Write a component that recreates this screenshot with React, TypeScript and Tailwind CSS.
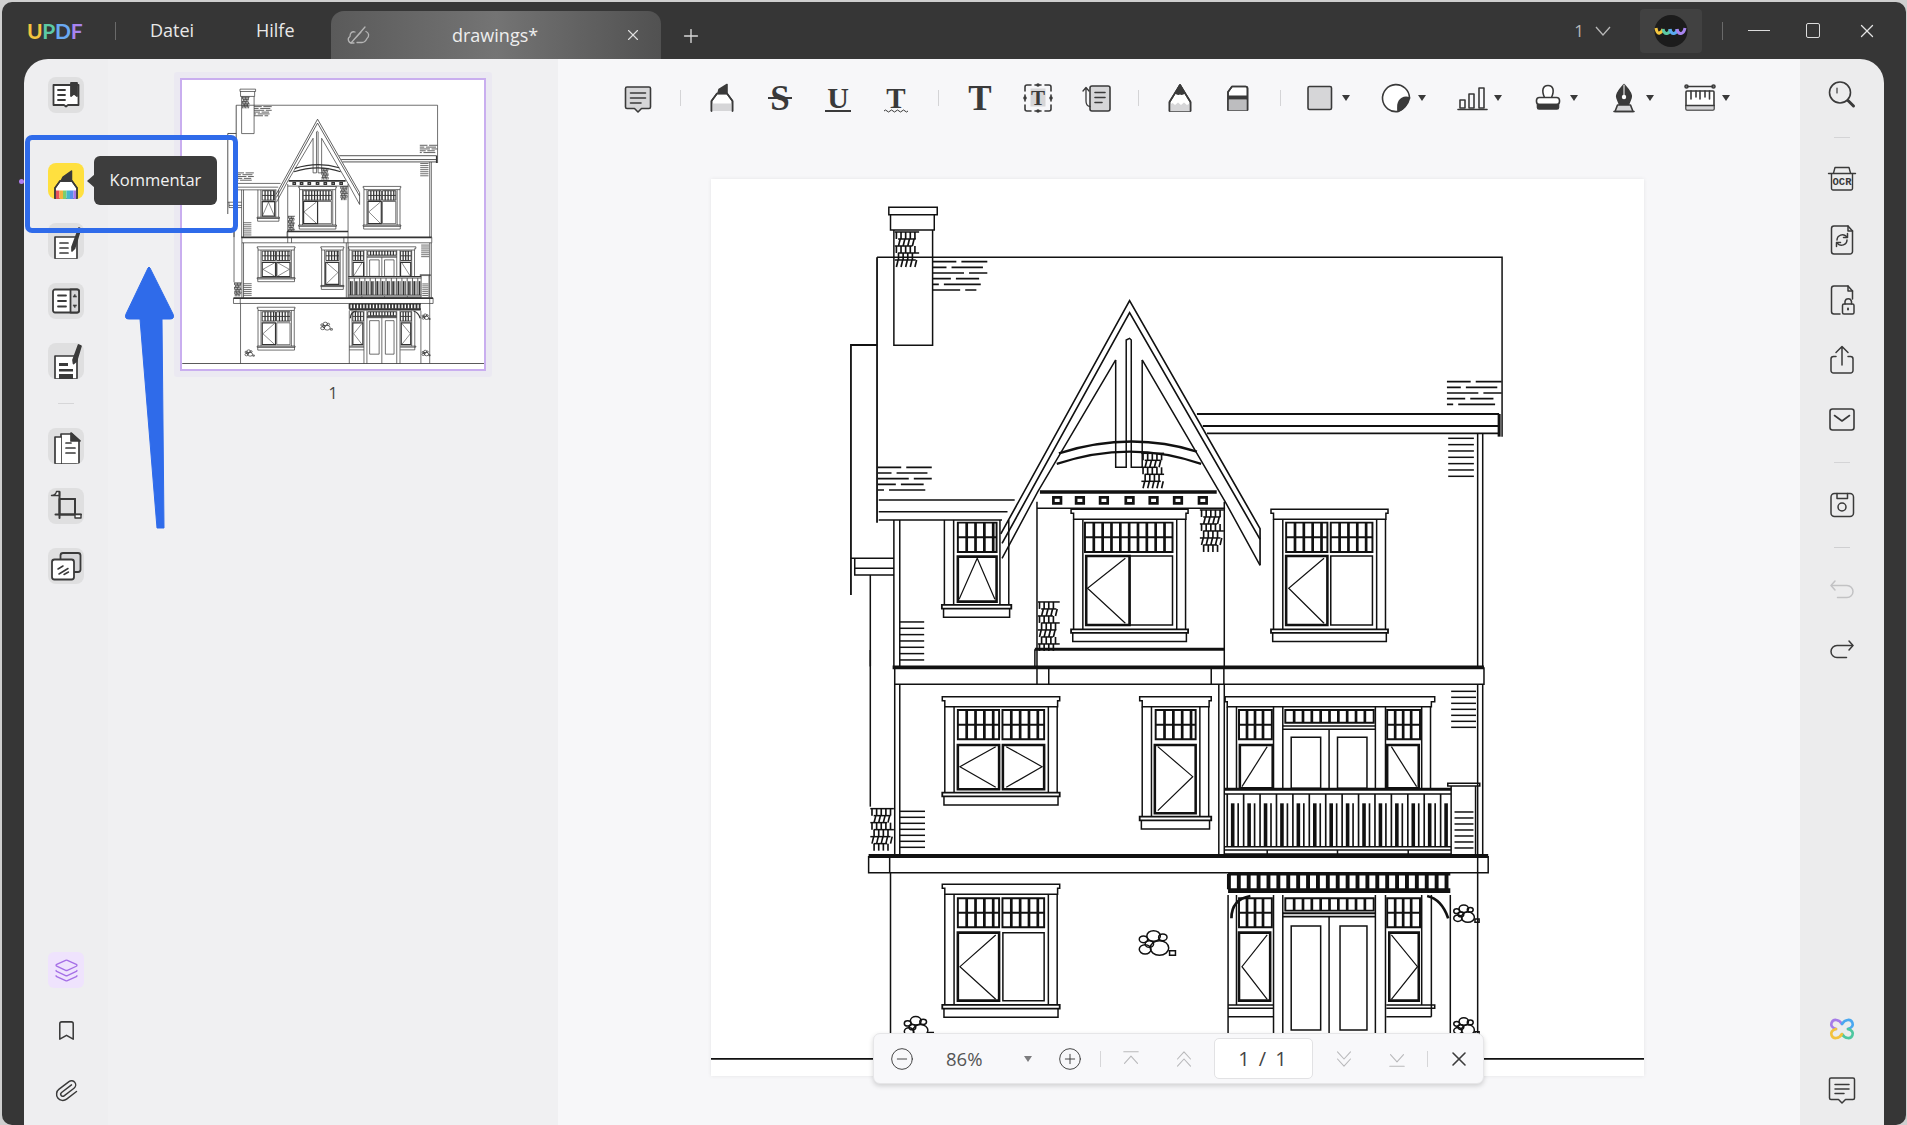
import { createContext, useContext, type ReactNode } from "react";
import { Bookmark, Layers, Paperclip, Plus, X } from "lucide-react";

const INK = "#3a3a3a";
const TINT = "#d6d6d8";

// ── Line work for the drawing ─────────────────────────────────────────────────
const LineWidth = createContext(1.4);

function L({ d, w = 1 }: { d: string; w?: number }) {
  const lw = useContext(LineWidth);
  return <path d={d} fill="none" stroke="currentColor" strokeWidth={lw * w} vectorEffect="non-scaling-stroke" />;
}

function steps(from: number, to: number, step: number) {
  const out: number[] = [];
  for (let v = from; v <= to + 0.01; v += step) out.push(v);
  return out;
}

const box = (x1: number, y1: number, x2: number, y2: number) => `M${x1} ${y1}H${x2}V${y2}H${x1}Z`;
const blob = (x: number, y: number, r: number) => `M${x - r} ${y}a${r} ${r} 0 1 0 ${r * 2} 0a${r} ${r} 0 1 0 ${-r * 2} 0Z`;

function Grille({ x1, x2, y1, y2, rows = 2, pane = 21 }: { x1: number; x2: number; y1: number; y2: number; rows?: number; pane?: number }) {
  const cols = steps(x1 + pane, x2 - 4, pane);
  const bars = rows === 2 ? [(y1 + y2) / 2] : [];
  return (
    <>
      <L d={box(x1, y1, x2, y2)} w={1.3} />
      {cols.map((x) => <L key={x} d={`M${x} ${y1}V${y2}`} w={1.8} />)}
      {bars.map((y) => <L key={y} d={`M${x1} ${y}H${x2}`} w={1.3} />)}
    </>
  );
}

function Hatch({ x1, x2, y1, y2, step = 19 }: { x1: number; x2: number; y1: number; y2: number; step?: number }) {
  return <>{steps(y1, y2, step).map((y) => <L key={y} d={`M${x1} ${y}H${x2}`} />)}</>;
}

// hatch with the breaks that the roof patches have
function RoofHatch({ x1, x2, y1, y2, step = 17 }: { x1: number; x2: number; y1: number; y2: number; step?: number }) {
  const span = x2 - x1;
  const breaks = [0.48, 0.3, 0.62, 0.38, 0.16, 0.55];
  const trims = [0, 0.08, 0, 0.15, 0.12, 0.2];
  return (
    <>
      {steps(y1, y2, step).map((y, i) => {
        const gap = x1 + span * breaks[i % 6];
        const end = x2 - span * trims[i % 6];
        return <L key={y} d={`M${x1} ${y}H${gap - 6}M${gap + 6} ${y}H${end}`} w={1.1} />;
      })}
    </>
  );
}

function Shingles({ x1, x2, y1, y2 }: { x1: number; x2: number; y1: number; y2: number }) {
  const rows = steps(y1, y2 - 10, 21);
  return (
    <>
      {rows.map((y, i) => (
        <g key={y}>
          <L d={`M${x1 + (i % 2) * 8} ${y}H${x2 - (i % 3) * 8}`} />
          {steps(x1 + 4 + (i % 2) * 5, x2 - 6, 11).map((x) => (
            <L key={x} d={`M${x + (i % 3 === 1 ? 4 : 0)} ${y}L${x} ${y + 21}`} w={1.1} />
          ))}
        </g>
      ))}
    </>
  );
}

function Window({ x, r, y, b, cap = true, foot = 37, children }: { x: number; r: number; y: number; b: number; cap?: boolean; foot?: number; children?: ReactNode }) {
  const top = y + 30;
  return (
    <>
      {cap && <L d={`M${x} ${y}H${r}V${y + 12}H${r - 5}V${top}H${x + 6}V${y + 12}H${x}Z`} />}
      {[x + 6, x + 28, r - 27, r - 6].map((v) => <L key={v} d={`M${v} ${top}V${b}`} />)}
      <L d={box(x, b, r, b + 11)} w={1.2} />
      <L d={`M${x + 4} ${b + 11}V${b + foot}H${r - 4}V${b + 11}`} />
      {children}
    </>
  );
}

function Sash({ x1, x2, y1, y2, d, thin = false }: { x1: number; x2: number; y1: number; y2: number; d?: string; thin?: boolean }) {
  return (
    <>
      <L d={box(x1, y1, x2, y2)} w={thin ? 1 : 1.7} />
      {d && <L d={d} w={0.8} />}
    </>
  );
}

function Shrub({ x, y, k = 1 }: { x: number; y: number; k?: number }) {
  return (
    <>
      <L d={blob(x, y - 22 * k, 16 * k)} />
      <L d={blob(x - 24 * k, y - 12 * k, 10 * k)} />
      <L d={blob(x + 22 * k, y - 18 * k, 10 * k)} />
      <L d={blob(x + 14 * k, y + 14 * k, 22 * k)} />
      <L d={blob(x - 20 * k, y + 18 * k, 14 * k)} />
      <L d={blob(x - 10 * k, y + 2 * k, 10 * k)} />
      <L d={box(x + 38 * k, y + 22 * k, x + 52 * k, y + 36 * k)} />
    </>
  );
}

// traced in two bands, coordinates are crop pixels of the upper and the lower half
function House({ lw, className }: { lw: number; className: string }) {
  return (
    <LineWidth.Provider value={lw}>
      <svg viewBox="711 179 933 897" className={className}>
        <g transform="translate(840 190) scale(.4209 .3333)">
          {/* chimney and main roof */}
          <L d={box(116, 52, 231, 74)} />
          <L d="M120 74V120H224V74" />
          <L d="M128 120V466H220V120" />
          <Shingles x1={130} x2={188} y1={126} y2={232} />
          <L d="M88 202H1573V740" />
          <L d="M88 202V998" w={1.2} />
          <L d="M88 465H26V1215" w={1.2} />
          <L d="M26 1105H128M35 1105V1155H128M35 1135H128M72 1155V1430M128 990V1430M142 990V1430" />
          <RoofHatch x1={220} x2={350} y1={215} y2={300} />
          <RoofHatch x1={1442} x2={1572} y1={575} y2={658} />
          <Hatch x1={1445} x2={1506} y1={745} y2={860} step={19} />
          <RoofHatch x1={90} x2={218} y1={832} y2={915} />
          <Hatch x1={142} x2={200} y1={1296} y2={1412} step={19} />
          {/* eaves */}
          <L d="M92 930H415M92 965H398M92 990H385" />
          <L d="M848 672H1566M862 708H1566M872 730H1566" w={1.2} />
          <L d="M1566 672V740" w={2} />
          <L d="M1515 730V1430M1527 730V1430" />
          {/* gable */}
          <L d="M382 1032L688 332L998 1016V1126" w={1.1} />
          <L d="M385 1060L688 368L998 1048" w={1.1} />
          <L d="M385 1105L470 905L655 510M718 510L915 935L998 1126" />
          <L d="M655 510V832H680V450L688 445L692 450V832H718V510" />
          <L d="M520 790Q690 722 848 785" w={1.6} />
          <L d="M515 822Q690 748 858 822" w={1.6} />
          <Shingles x1={716} x2={770} y1={790} y2={904} />
          <Shingles x1={855} x2={912} y1={960} y2={1095} />
          <Shingles x1={470} x2={522} y1={1236} y2={1372} />
          <L d="M475 906H895" w={2.4} />
          <L d="M468 955H915M468 935V1430M913 935V1430" />
          {[516, 570, 627, 688, 745, 803, 862].map((x) => (
            <g key={x}>
              <L d={box(x - 9, 922, x + 9, 940)} w={1.8} />
            </g>
          ))}
          <L d="M463 1378H913" w={2} />
          <L d="M463 1378V1430" />
          {/* upper windows */}
          <Window x={242} r={407} y={960} b={1245} cap={false}>
            <Grille x1={280} x2={372} y1={998} y2={1086} />
            <Sash x1={280} x2={372} y1={1100} y2={1235} d="M283 1228L326 1105L368 1228" />
          </Window>
          <Window x={549} r={827} y={958} b={1318}>
            <Grille x1={582} x2={790} y1={998} y2={1086} />
            <Sash x1={585} x2={688} y1={1098} y2={1305} d="M678 1105L588 1195L678 1300" />
            <Sash x1={688} x2={790} y1={1098} y2={1305} thin />
          </Window>
          <Window x={1024} r={1302} y={958} b={1318}>
            <Grille x1={1060} x2={1158} y1={998} y2={1086} />
            <Grille x1={1166} x2={1265} y1={998} y2={1086} />
            <Sash x1={1060} x2={1158} y1={1098} y2={1305} d="M1150 1105L1066 1195L1150 1300" />
            <Sash x1={1166} x2={1265} y1={1098} y2={1305} thin />
          </Window>
        </g>

        <g transform="translate(840 650) scale(.4209 .3333)">
          {/* first floor beam */}
          <L d="M125 52H1530" w={2.4} />
          <L d="M130 52V103H1530V52M468 52V103M496 52V103M882 52V103M912 52V103" />
          <L d="M72 0V470" />
          <L d="M130 103V615M142 103V615M1515 103V615M1527 103V615M900 103V615M913 103V615" />
          <Hatch x1={1452} x2={1511} y1={124} y2={232} step={18} />
          <Hatch x1={142} x2={202} y1={484} y2={596} step={18} />
          <Shingles x1={72} x2={128} y1={476} y2={610} />
          <Window x={243} r={522} y={140} b={428}>
            <Grille x1={280} x2={378} y1={180} y2={268} />
            <Grille x1={386} x2={485} y1={180} y2={268} />
            <Sash x1={280} x2={378} y1={285} y2={418} d="M370 290L285 350L370 412" />
            <Sash x1={387} x2={485} y1={285} y2={418} d="M395 290L480 350L395 412" />
          </Window>
          <Window x={712} r={882} y={140} b={500}>
            <Grille x1={750} x2={845} y1={180} y2={268} />
            <Sash x1={748} x2={845} y1={285} y2={490} d="M755 290L838 380L755 482" />
          </Window>
          {/* balcony door group */}
          <L d="M915 140H1413V155H1405V170H920V155H915Z" />
          <L d="M920 170V415M942 170V415M1030 170V415M1052 170V415M1272 170V415M1296 170V415M1382 170V415M1403 170V415" />
          <Grille x1={948} x2={1026} y1={180} y2={268} pane={19} />
          <Grille x1={1300} x2={1378} y1={180} y2={268} pane={19} />
          <Grille x1={1058} x2={1268} y1={180} y2={218} rows={1} />
          <L d="M1052 228H1272M1052 238H1272M1162 238V415" />
          <L d={box(1072, 262, 1142, 415)} />
          <L d={box(1182, 262, 1252, 415)} />
          <Sash x1={950} x2={1028} y1={285} y2={415} d="M1015 290L955 410" />
          <Sash x1={1300} x2={1375} y1={285} y2={415} d="M1310 290L1370 410" />
          {/* railing */}
          <L d="M914 418H1452" w={2} />
          <L d="M914 432H1452M914 590H1452M914 600H1452M914 612H1452" />
          {steps(920, 1448, 13).map((x, i) => <L key={x} d={`M${x} ${i % 3 === 0 ? 432 : 460}V590`} w={i % 3 === 1 ? 2.4 : 1.1} />)}
          <L d="M1444 400H1520V408H1444ZM1452 408V612M1510 408V612M1015 600V612M1182 600V612M1350 600V612" />
          <Hatch x1={1460} x2={1505} y1={486} y2={606} step={18} />
          {/* main beam */}
          <L d="M68 618H1540" w={2.6} />
          <L d="M68 618V668H1540V618M118 618V668M1515 618V668" />
          <L d="M120 668V1227M1515 668V1227" />
          <Window x={243} r={522} y={703} b={1065}>
            <Grille x1={280} x2={378} y1={745} y2={832} />
            <Grille x1={386} x2={485} y1={745} y2={832} />
            <Sash x1={280} x2={378} y1={848} y2={1052} d="M370 855L285 950L370 1048" />
            <Sash x1={387} x2={485} y1={848} y2={1052} thin />
          </Window>
          <Shrub x={745} y={880} />
          <Shrub x={180} y={1130} k={0.8} />
          <Shrub x={1482} y={792} k={0.7} />
          <Shrub x={1482} y={1130} k={0.7} />
          {/* porch */}
          <L d="M922 672H1450" w={2} />
          <L d="M922 722H1450" w={3.2} />
          {steps(924, 1448, 23.5).map((x) => <L key={x} d={`M${x} 672V718`} w={2.6} />)}
          <L d="M930 805Q930 748 975 738" w={1.8} />
          <L d="M1445 805Q1430 748 1395 738" w={1.8} />
          <L d="M922 735V1227M942 735V1065M1030 735V1227M1052 735V1227M1272 735V1227M1296 735V1227M1382 735V1065M1405 735V1100M1450 735V1227M1162 800V1227" />
          <Grille x1={948} x2={1026} y1={745} y2={832} pane={19} />
          <Grille x1={1300} x2={1378} y1={745} y2={832} pane={19} />
          <Grille x1={1058} x2={1268} y1={745} y2={782} rows={1} />
          <L d="M1052 790H1272M1052 800H1272" w={1.3} />
          <L d={box(1072, 828, 1142, 1140)} />
          <L d={box(1188, 828, 1252, 1140)} />
          <Sash x1={948} x2={1022} y1={848} y2={1052} d="M1015 855L955 950L1015 1048" />
          <Sash x1={1305} x2={1375} y1={848} y2={1052} d="M1310 855L1372 950L1310 1048" />
          <L d="M922 1065H1030M922 1075H1030M922 1100H1030M1298 1065H1413V1075H1298M1298 1100H1405" />
          {/* ground */}
          <L d="M-310 1227H1920" w={1.15} />
        </g>
      </svg>
    </LineWidth.Provider>
  );
}

// ── Icon canvas ───────────────────────────────────────────────────────────────
function Ic({ children, size = 36, color = INK, sw = 1.6 }: { children: ReactNode; size?: number; color?: string; sw?: number }) {
  return (
    <svg width={size} height={size} viewBox="0 0 36 36" fill="none" stroke={color} strokeWidth={sw} strokeLinecap="round" strokeLinejoin="round">
      {children}
    </svg>
  );
}

const serif = "'Liberation Serif', serif";

// serif letter tools: the letter stays text, only the rule under or through it is a line
function Letter({ char, size, children }: { char: string; size: string; children?: ReactNode }) {
  return (
    <span className={`relative flex h-[36px] w-[36px] items-center justify-center font-['Liberation_Serif',serif] font-bold leading-none text-[#3a3a3a] ${size}`}>
      {char}
      {children}
    </span>
  );
}

const toolIcons: Record<string, ReactNode> = {
  comment: (
    <Ic>
      <path d="M7 7H29a1.5 1.5 0 0 1 1.5 1.5V27a1.5 1.5 0 0 1-1.5 1.5H21.5L18 32L14.500 28.500H7A1.500 1.500 0 0 1 5.500 27V8.500A1.500 1.500 0 0 1 7 7Z" fill={TINT} />
      <path d="M10.500 13H25.500M10.500 18H25.500M10.500 23H21" />
    </Ic>
  ),
  marker: (
    <Ic>
      <path d="M7.500 31V21L13 13.500H23L28.500 21V31" fill="#fff" />
      <path d="M7.500 31V23.500H28.500V31Z" fill={TINT} stroke="none" />
      <path d="M7.500 31V21L13 13.500H23L28.500 21V31" />
      <path d="M14 13.500L15 9.500L23 4.500V13.500Z" fill={INK} />
    </Ic>
  ),
  strike: (
    <Letter char="S" size="text-[35px]">
      <span className="absolute left-[6px] top-[17px] h-[2px] w-[24px] bg-[#3a3a3a]" />
    </Letter>
  ),
  under: (
    <Letter char="U" size="text-[30px]">
      <span className="absolute left-[5px] top-[30px] h-[2px] w-[26px] bg-[#3a3a3a]" />
    </Letter>
  ),
  squiggle: (
    <Letter char="T" size="text-[29px]">
      <svg width="26" height="4" viewBox="0 0 24 4" fill="none" stroke={INK} strokeWidth="1" className="absolute left-[5px] top-[29px]">
        <path d="M0 2q1.500-2 3 0t3 0t3 0t3 0t3 0t3 0t3 0t3 0" />
      </svg>
    </Letter>
  ),
  text: <Letter char="T" size="text-[35px]" />,
  textbox: (
    <span className="relative flex h-[36px] w-[36px] items-center justify-center">
      <span className="absolute inset-0">
        <Ic>
          <path d="M10.500 8.500H25.500V26.500H10.500Z" fill={TINT} stroke="none" />
          <path d="M11 5H7A2 2 0 0 0 5 7V11M25 5H29A2 2 0 0 1 31 7V11M11 31H7A2 2 0 0 1 5 29V25M25 31H29A2 2 0 0 0 31 29V25M15 5H21M15 31H21M5 15V21M31 15V21" />
          <circle cx="18" cy="5" r="1" fill={INK} />
          <circle cx="18" cy="31" r="1" fill={INK} />
          <circle cx="5" cy="18" r="1" fill={INK} />
          <circle cx="31" cy="18" r="1" fill={INK} />
        </Ic>
      </span>
      <span className="relative font-['Liberation_Serif',serif] text-[21px] font-bold leading-none text-[#3a3a3a]">T</span>
    </span>
  ),
  callout: (
    <Ic>
      <rect x="12" y="6" width="20" height="25" rx="2" fill={TINT} />
      <path d="M17 12.500H27M17 17.500H27M17 22.500H24" />
      <path d="M12 26.500Q8 26 8 21V8M5 11L8 7.500L11 11" strokeWidth="1.300" />
    </Ic>
  ),
  pencil: (
    <Ic>
      <path d="M7.500 31V22L18 5L28.500 22V31Z" fill="#fff" />
      <path d="M7.500 31V25L10.500 23L13 25L16 22.500L19 25L22 22.500L25 25L28.500 23V31Z" fill={TINT} stroke="none" />
      <path d="M7.500 31V22L18 5L28.500 22V31" />
      <path d="M13.500 13L18 5L22.500 13Q20 15 18 13.500Q16 15 13.500 13Z" fill={INK} />
    </Ic>
  ),
  eraser: (
    <Ic>
      <path d="M8 30V12L12 6.500H25.500A2 2 0 0 1 27.500 8.500V30Z" fill="#fff" />
      <path d="M8 19.500H27.500V30H8Z" fill="#bdbdbf" stroke="none" />
      <path d="M8 15.500H27.500V19.500H8Z" fill={INK} stroke="none" />
      <path d="M8 30V12L12 6.500H25.500A2 2 0 0 1 27.500 8.500V30" />
    </Ic>
  ),
  rect: (
    <Ic>
      <rect x="6" y="6.500" width="23.500" height="23" rx="1.500" fill={TINT} />
    </Ic>
  ),
  sticker: (
    <Ic>
      <path d="M29 23C27 27 24 30 20 31.500A13.500 13.500 0 1 1 31.500 18" fill="#fff" />
      <path d="M31.500 18C26 16 21 19 20 25Q19.800 28 20 31.500C25 30 30 25 31.500 18Z" fill={INK} />
    </Ic>
  ),
  chart: (
    <Ic>
      <path d="M4 29.500H33" />
      <rect x="6" y="20" width="5" height="8" />
      <rect x="15" y="14" width="5" height="14" />
      <rect x="25" y="8" width="5" height="20" />
    </Ic>
  ),
  stamp: (
    <Ic>
      <path d="M14.500 17.500C11.500 11 12.500 5.500 18 5.500S24.500 11 21.500 17.500" fill="#fff" />
      <rect x="6.500" y="17.500" width="23" height="7" rx="3" fill="#fff" />
      <path d="M7.500 24.500H28.500V27.500A1.500 1.500 0 0 1 27 29H9A1.500 1.500 0 0 1 7.500 27.500Z" fill={INK} />
    </Ic>
  ),
  nib: (
    <Ic>
      <path d="M18 4.500C12 11 9.500 15 11 18L13.500 24.500H22.500L25 18C26.500 15 24 11 18 4.500Z" fill={INK} />
      <circle cx="18" cy="17" r="2.200" fill="#fff" stroke="none" />
      <path d="M18 5V15" stroke="#fff" strokeWidth="1" />
      <path d="M9 31.500L11.500 25H24.500L27 31.500Z" fill={TINT} />
      <path d="M8 31.500H28" />
    </Ic>
  ),
  ruler: (
    <Ic>
      <path d="M5 6.500H31" />
      <circle cx="4.500" cy="6.500" r="1.500" />
      <circle cx="31.500" cy="6.500" r="1.500" />
      <rect x="4" y="11" width="28" height="19" rx="1" fill="#fff" />
      <path d="M4.500 25.500H31.500V29.500H4.500Z" fill={TINT} stroke="none" />
      <path d="M4 25.500H32M9 11V19M14 11V17M18 11V19M23 11V17M27.500 11V19" />
    </Ic>
  ),
};

function Caret({ color = INK }: { color?: string }) {
  return <span className="h-0 w-0 border-x-[4px] border-t-[6px] border-x-transparent" style={{ borderTopColor: color }} />;
}

function ToolSep() {
  return <span className="ml-[13px] mr-[12px] h-[16px] w-px bg-[#d4d4d6]" />;
}

function Tool({ name }: { name: string }) {
  return <span className="flex w-[58px] items-center justify-center">{toolIcons[name]}</span>;
}

function ToolCaret({ name }: { name: string }) {
  return (
    <span className="flex w-[76px] items-center">
      <span className="flex w-[54px] items-center justify-center">{toolIcons[name]}</span>
      <span className="-ml-[5px] flex">
        <Caret />
      </span>
    </span>
  );
}

function CommentToolbar() {
  return (
    <div className="flex h-[78px] items-center pl-[51px]">
      <Tool name="comment" />
      <ToolSep />
      <Tool name="marker" />
      <Tool name="strike" />
      <Tool name="under" />
      <Tool name="squiggle" />
      <ToolSep />
      <Tool name="text" />
      <Tool name="textbox" />
      <Tool name="callout" />
      <ToolSep />
      <Tool name="pencil" />
      <Tool name="eraser" />
      <ToolSep />
      <ToolCaret name="rect" />
      <ToolCaret name="sticker" />
      <ToolCaret name="chart" />
      <ToolCaret name="stamp" />
      <ToolCaret name="nib" />
      <ToolCaret name="ruler" />
    </div>
  );
}

// ── Left rail ─────────────────────────────────────────────────────────────────
function RailButton({ children, active = false }: { children: ReactNode; active?: boolean }) {
  return (
    <div className={`flex h-[36px] w-[36px] items-center justify-center overflow-hidden rounded-[8px] ${active ? "bg-[#ffe03f]" : "bg-[#dfdfe0]"}`}>
      {children}
    </div>
  );
}

function LeftRail() {
  return (
    <aside className="relative flex w-[84px] shrink-0 flex-col items-center bg-[#eeeef0] pb-[17px] pt-[18px]">
      <div className="flex flex-col items-center gap-6">
        <div className="mb-[26px]">
          <RailButton>
            <Ic sw={1.8}>
              <path d="M5.500 8H30.500V28H20L18 29.500L16 28H5.500Z" fill="#fff" />
              <path d="M10 13H17M10 18H17M10 23H17" />
              <path d="M23 6H29V19L26 16.500L23 19Z" fill={INK} />
            </Ic>
          </RailButton>
        </div>
        <RailButton active>
          <Ic sw={1.5} size={36}>
            <path d="M7 36V25L12 18H24L29 25V36Z" fill="#fff" />
            <path d="M7.800 27.500H11.500V36H7.800Z" fill="#e8545a" stroke="none" />
            <path d="M11.500 27.500H15V36H11.500Z" fill="#f4b13d" stroke="none" />
            <path d="M15 27.500H18.500V36H15Z" fill="#7ccf6b" stroke="none" />
            <path d="M18.500 27.500H22V36H18.500Z" fill="#46b7c9" stroke="none" />
            <path d="M22 27.500H25.500V36H22Z" fill="#5b8dec" stroke="none" />
            <path d="M25.500 27.500H28.300V36H25.500Z" fill="#a975ea" stroke="none" />
            <path d="M7 36V25L12 18H24L29 25V36" />
            <path d="M13 18L15 14L23.500 8V18Z" fill={INK} />
          </Ic>
        </RailButton>
        <RailButton>
          <Ic sw={1.7}>
            <path d="M7 14H29V36H7Z" fill="#fff" />
            <path d="M12 20H20M12 25H20M12 30H20" />
            <path d="M24 24L31 5L32.500 6L26.500 25.500L24 28Z" fill={INK} />
          </Ic>
        </RailButton>
        <RailButton>
          <Ic sw={1.8}>
            <rect x="5" y="6.500" width="26" height="23" rx="2" fill="#fff" />
            <path d="M22.500 6.500H29A2 2 0 0 1 31 8.500V27.500A2 2 0 0 1 29 29.500H22.500Z" fill={TINT} />
            <path d="M10 12.500H18M10 18H18M10 23.500H18" />
            <path d="M26.700 11.500L25 14H28.400ZM26.700 24.500L25 22H28.400Z" fill={INK} strokeWidth="0.600" />
          </Ic>
        </RailButton>
        <RailButton>
          <Ic sw={1.7}>
            <path d="M7 13H29V36H7Z" fill="#fff" />
            <path d="M11 20H20V23H11ZM11 26H25V28.500H11ZM11 31H25V36H11Z" fill={INK} stroke="none" />
            <path d="M25 17L30.500 2L33 3L28.500 18L25.500 20.500Z" fill={INK} />
          </Ic>
        </RailButton>
        <span className="h-px w-[16px] bg-[#d6d6d8]" />
        <RailButton>
          <Ic sw={1.7}>
            <path d="M13 6H24L31 13V36H13Z" fill="#fff" />
            <path d="M13 9H7V36H13" fill="#fff" />
            <path d="M23 5L32 13H23Z" fill={INK} />
            <path d="M18 15H23M18 20H27M18 25H27" />
          </Ic>
        </RailButton>
        <RailButton>
          <Ic sw={2}>
            <path d="M11.500 11H27V26.500H11.500Z" />
            <path d="M3.500 7.500H11.500V3.500H8.500Q8 7 3.500 7.500Z" fill="#fff" strokeWidth="1.400" />
            <path d="M11.500 4V30M7.500 26.500H33" />
            <path d="M27 26.500H33V30H27Z" fill="#fff" strokeWidth="1.400" />
            <path d="M27 11V26" />
          </Ic>
        </RailButton>
        <RailButton>
          <Ic sw={1.8}>
            <rect x="12.500" y="5" width="20" height="19" rx="2.500" fill={TINT} />
            <rect x="4" y="11.500" width="22" height="20" rx="2.500" fill="#fff" />
            <path d="M10 21L15 18M11 26L20 20.500M16 26.500L20.500 24" strokeWidth="1.500" />
          </Ic>
        </RailButton>
      </div>
      <div className="mt-auto flex flex-col items-center gap-6">
        <div className="flex h-[36px] w-[36px] items-center justify-center rounded-[6px] bg-[#efe3fd]">
          <Layers size={25} strokeWidth={1.3} color="#a56fe6" />
        </div>
        <div className="flex h-[36px] w-[36px] items-center justify-center">
          <Bookmark size={23} strokeWidth={1.6} color={INK} />
        </div>
        <div className="flex h-[36px] w-[36px] items-center justify-center">
          <Paperclip size={25} strokeWidth={1.4} color={INK} className="rotate-[8deg]" />
        </div>
      </div>
    </aside>
  );
}

// ── Right rail ────────────────────────────────────────────────────────────────
function RightRail() {
  return (
    <aside className="flex w-[84px] shrink-0 flex-col items-center bg-[#ececed] pb-[18px] pt-[18px]">
      <div className="flex flex-col items-center gap-6">
        <Ic>
          <circle cx="16" cy="15.500" r="10.500" />
          <path d="M13 11V16" strokeWidth="1.200" />
          <path d="M24 23.500L29.500 29" strokeWidth="3" />
        </Ic>
        <span className="h-px w-[16px] bg-[#d4d4d6]" />
        <span className="relative block h-[36px] w-[36px]">
          <Ic sw={1.4}>
            <path d="M9.500 11L11 5.500H25L26.500 11" />
            <path d="M4.500 11.500H31.500" />
            <path d="M7.500 12V26.500A1.500 1.500 0 0 0 9 28H27A1.500 1.500 0 0 0 28.500 26.500V12" />
          </Ic>
          <span className="absolute left-0 top-[14px] w-[36px] text-center font-['Liberation_Mono',monospace] text-[10.5px] font-bold leading-[12px] text-[#3a3a3a]">OCR</span>
        </span>
        <Ic sw={1.5}>
          <path d="M24 4H10A2.500 2.500 0 0 0 7.500 6.500V29.500A2.500 2.500 0 0 0 10 32H26A2.500 2.500 0 0 0 28.500 29.500V9Z" />
          <path d="M24 4V9H28.500" />
          <path d="M13 18A5.500 5.500 0 0 1 22.500 14.500M23 18A5.500 5.500 0 0 1 13.500 21.500" />
          <path d="M23.500 11.500V15.500H19.500M12.500 24.500V20.500H16.500" />
        </Ic>
        <Ic sw={1.5}>
          <path d="M16 32H10A2.500 2.500 0 0 1 7.500 29.500V6.500A2.500 2.500 0 0 1 10 4H24L28.500 9V17" />
          <path d="M24 4V9H28.500" />
          <rect x="18.500" y="22" width="11.500" height="10" rx="1.500" />
          <path d="M21 22V19.500A3.300 3.300 0 0 1 27.500 19.500V22" />
          <path d="M24 26.500V27.500" strokeWidth="2" />
        </Ic>
        <Ic sw={1.5}>
          <path d="M12 14.500H9.500A2.500 2.500 0 0 0 7 17V28.500A2.500 2.500 0 0 0 9.500 31H26.500A2.500 2.500 0 0 0 29 28.500V17A2.500 2.500 0 0 0 26.500 14.500H24" />
          <path d="M18 23V5M12 10.500L18 4.500L24 10.500" />
        </Ic>
        <Ic sw={1.6}>
          <rect x="6" y="7" width="24" height="21" rx="2.500" />
          <path d="M10.500 13.500L18 19L25.500 13.500" />
        </Ic>
        <span className="h-px w-[16px] bg-[#d4d4d6]" />
        <Ic sw={1.5}>
          <rect x="7" y="6.500" width="22.500" height="23" rx="3.500" />
          <path d="M13 6.500V11.500H23.500V6.500" />
          <circle cx="18" cy="20" r="4" />
        </Ic>
        <span className="h-px w-[16px] bg-[#cfcfd1]" />
        <Ic color="#c2c2c4" sw={1.5}>
          <path d="M11 9L7 13.500L11 18" />
          <path d="M7.500 13.500H23A6 6 0 0 1 23 25.500H13.500" />
        </Ic>
        <Ic sw={1.5}>
          <path d="M25 9L29 13.500L25 18" />
          <path d="M28.500 13.500H13A6 6 0 0 0 13 25.500H22.500" />
        </Ic>
      </div>
      <div className="mt-auto flex flex-col items-center gap-6">
        <Ic sw={2.6}>
          <path d="M18 13C15 8 9 7.500 7.500 12C6.500 15 9 17 12 18" stroke="#a57be8" />
          <path d="M18 13C21 8 27 7.500 28.500 12C29.500 15 27 17 24 18" stroke="#4aa8f0" />
          <path d="M24 18C27 19 29.500 21 28.500 24C27 28.500 21 28 18 23" stroke="#4ec7a0" />
          <path d="M12 18C9 19 6.500 21 7.500 24C9 28.500 15 28 18 23" stroke="#f2c23e" />
        </Ic>
        <Ic sw={1.5}>
          <path d="M7 7H29a1.500 1.500 0 0 1 1.500 1.500V27a1.500 1.500 0 0 1-1.500 1.500H21.500L18 32L14.500 28.500H7A1.500 1.500 0 0 1 5.500 27V8.500A1.500 1.500 0 0 1 7 7Z" />
          <path d="M11 13.500H25M11 18H25M11 22.500H20" />
        </Ic>
      </div>
    </aside>
  );
}

// ── Bottom page bar ───────────────────────────────────────────────────────────
function PageBar() {
  const off = "#b9b9bb";
  return (
    <div className="absolute bottom-[41px] left-[315px] flex h-[51px] w-[611px] items-center rounded-[7px] border border-[#e6e6e8] bg-[#f8f8fa] text-[#3f3f3f] shadow-[0_2px_5px_rgba(0,0,0,0.16)]">
      <span className="ml-[16px]">
        <Ic size={24} sw={1.4}>
          <circle cx="18" cy="18" r="15.500" />
          <path d="M11 18H25" />
        </Ic>
      </span>
      <span className="ml-[32px] w-[78px] text-[18.5px] text-[#555]">86%</span>
      <Caret color="#7c7c7e" />
      <span className="ml-[26px]">
        <Ic size={24} sw={1.4}>
          <circle cx="18" cy="18" r="15.500" />
          <path d="M11 18H25M18 11V25" />
        </Ic>
      </span>
      <span className="ml-[18px] h-[16px] w-px bg-[#d6d6d8]" />
      <span className="ml-[17px]">
        <Ic size={26} color={off} sw={1.5}>
          <path d="M8 8H28M9 24L18 14L27 24" />
        </Ic>
      </span>
      <span className="ml-[27px]">
        <Ic size={26} color={off} sw={1.5}>
          <path d="M9 18L18 8L27 18M9 28L18 18L27 28" />
        </Ic>
      </span>
      <div className="ml-[17px] flex h-[41px] w-[99px] items-center justify-center rounded-[5px] border border-[#e2e2e4] bg-white text-[20px] tracking-[2px] text-[#444]">
        1 / 1
      </div>
      <span className="ml-[18px]">
        <Ic size={26} color={off} sw={1.5}>
          <path d="M9 8L18 18L27 8M9 18L18 28L27 18" />
        </Ic>
      </span>
      <span className="ml-[27px]">
        <Ic size={26} color={off} sw={1.5}>
          <path d="M9 12L18 22L27 12M8 28H28" />
        </Ic>
      </span>
      <span className="ml-[17px] h-[16px] w-px bg-[#d6d6d8]" />
      <X size={24} strokeWidth={1.6} className="ml-[19px] text-[#3c3c3c]" />
    </div>
  );
}

// ── Title bar ─────────────────────────────────────────────────────────────────
function TitleBar() {
  return (
    <header className="flex h-[57px] shrink-0 items-center pl-[25px] pr-[12px] text-[18px] text-[#e8e8e8]">
      <span className="flex w-[56px] font-['Lato',sans-serif] text-[21px] font-bold leading-none tracking-[-0.3px]">
        <span className="text-[#f3c53f]">U</span>
        <span className="text-[#5cc9a5]">P</span>
        <span className="text-[#6aa9f2]">D</span>
        <span className="text-[#a884f0]">F</span>
      </span>
      <span className="ml-[32px] h-[18px] w-px bg-[#6a6a6a]" />
      <span className="ml-[34px] w-[106px]">Datei</span>
      <span className="w-[75px]">Hilfe</span>
      <div className="flex h-[48px] w-[330px] items-center self-end rounded-t-[13px] bg-gradient-to-r from-[#5a5a5a] via-[#747474] to-[#515151]">
        <svg width="24" height="24" viewBox="0 0 24 24" fill="none" stroke="#b5b5b5" strokeWidth="1.300" strokeLinecap="round" className="ml-[15px]">
          <path d="M8 20H6a3.500 3.500 0 0 1-2-6.500C4 10 6 8 9 9M20 8.500a4 4 0 0 1 1 7c-1 2-3 4-5 4H11" />
          <path d="M5 20L19 4M9.500 15L15 9" />
        </svg>
        <span className="ml-[82px] w-[172px] text-[#eeeeee]">drawings*</span>
        <X size={18} strokeWidth={1.5} className="text-[#e0e0e0]" />
      </div>
      <Plus size={22} strokeWidth={1.5} className="ml-[19px] mt-[11px] text-[#d8d8d8]" />
      <span className="ml-auto text-[17px] text-[#b8b8b8]">1</span>
      <svg width="18" height="18" viewBox="0 0 18 18" fill="none" stroke="#b8b8b8" strokeWidth="1.300" className="ml-[10px]">
        <path d="M2 5L9 13L16 5" />
      </svg>
      <div className="ml-[28px] flex h-[44px] w-[62px] items-center justify-center rounded-[4px] bg-[#414141]">
        <svg width="34" height="32" viewBox="0 0 34 32">
          <ellipse cx="17" cy="16" rx="16.500" ry="16" fill="#1c1c1c" />
          <path d="M2 13q1 6 3.500 5t3.500-4" fill="none" stroke="#f3c53f" strokeWidth="3" />
          <path d="M9 14q1 5 4 4.500t3-4.500" fill="none" stroke="#5cc9a5" strokeWidth="3" />
          <path d="M16 14q1 5 4 4.500t3-4.500" fill="none" stroke="#5aa9f0" strokeWidth="3" />
          <path d="M23 14q1 5 4 4.500t4-5.500" fill="none" stroke="#a884f0" strokeWidth="3" />
        </svg>
      </div>
      <span className="ml-[20px] h-[18px] w-px bg-[#6a6a6a]" />
      <div className="ml-[9px] flex w-[54px] justify-center">
        <span className="h-[1.500px] w-[22px] bg-[#dcdcdc]" />
      </div>
      <div className="flex w-[54px] justify-center">
        <span className="h-[15px] w-[14px] rounded-[2px] border-[1.500px] border-[#dcdcdc]" />
      </div>
      <div className="flex w-[54px] justify-center">
        <X size={22} strokeWidth={1.4} className="text-[#e4e4e4]" />
      </div>
    </header>
  );
}

// ── Overlays from the screenshot's annotation ─────────────────────────────────
function Annotation() {
  return (
    <>
      <div className="absolute left-[25px] top-[135px] h-[98px] w-[213px] rounded-[7px] border-[5px] border-[#2f6bea]" />
      <div className="absolute left-[94px] top-[156px] flex h-[49px] w-[123px] items-center justify-center rounded-[6px] bg-[#3d3d3d] text-[16.500px] text-[#f2f2f2]">
        Kommentar
        <span className="absolute -left-[7px] top-[18px] h-0 w-0 border-y-[7px] border-r-[8px] border-y-transparent border-r-[#3d3d3d]" />
      </div>
      <svg width="60" height="270" viewBox="0 0 60 270" className="absolute left-[122px] top-[263px]">
        <path d="M26 5Q27 3 28 5L51 51Q53 56 48 56H40L42 265H35L18 56H7Q2 56 4 51Z" fill="#2f6bea" stroke="#2f6bea" strokeWidth="1" />
      </svg>
    </>
  );
}

export default function App() {
  return (
    <div className="relative h-[1125px] w-[1907px] overflow-hidden bg-[#cfcfcf] pl-[2px] pr-px pt-[2px] font-['Open_Sans',sans-serif]">
      <div className="flex h-full flex-col rounded-b-[10px] rounded-t-[10px] bg-[#363636]">
        <TitleBar />
        <div className="flex min-h-0 flex-1 px-[22px]">
          <div className="flex flex-1 overflow-hidden rounded-t-[24px]">
            <LeftRail />
            {/* thumbnails */}
            <section className="flex w-[450px] shrink-0 flex-col items-start bg-[#f0f0f2] pl-[66px] pt-[13px]">
              <div className="rounded-[3px] bg-[#ebe9f2] p-[6px]">
                <div className="border-2 border-[#c9aeef] bg-white text-[#333]">
                  <House lw={0.7} className="block h-[289px] w-[302px]" />
                </div>
              </div>
              <span className="mt-[4px] w-[318px] text-center text-[16px] text-[#444]">1</span>
            </section>
            {/* document */}
            <main className="relative flex min-w-0 flex-1 flex-col bg-[#f7f7f9]">
              <CommentToolbar />
              <div className="pl-[153px] pt-[42px]">
                <div className="w-[933px] bg-white text-[#111] shadow-[0_0_4px_rgba(0,0,0,0.08)]">
                  <House lw={1.5} className="block h-[897px] w-[933px]" />
                </div>
              </div>
              <PageBar />
            </main>
            <RightRail />
          </div>
        </div>
      </div>
      <span className="absolute left-[19px] top-[179px] h-[5px] w-[5px] rounded-full bg-[#b07ef0]" />
      <Annotation />
    </div>
  );
}
